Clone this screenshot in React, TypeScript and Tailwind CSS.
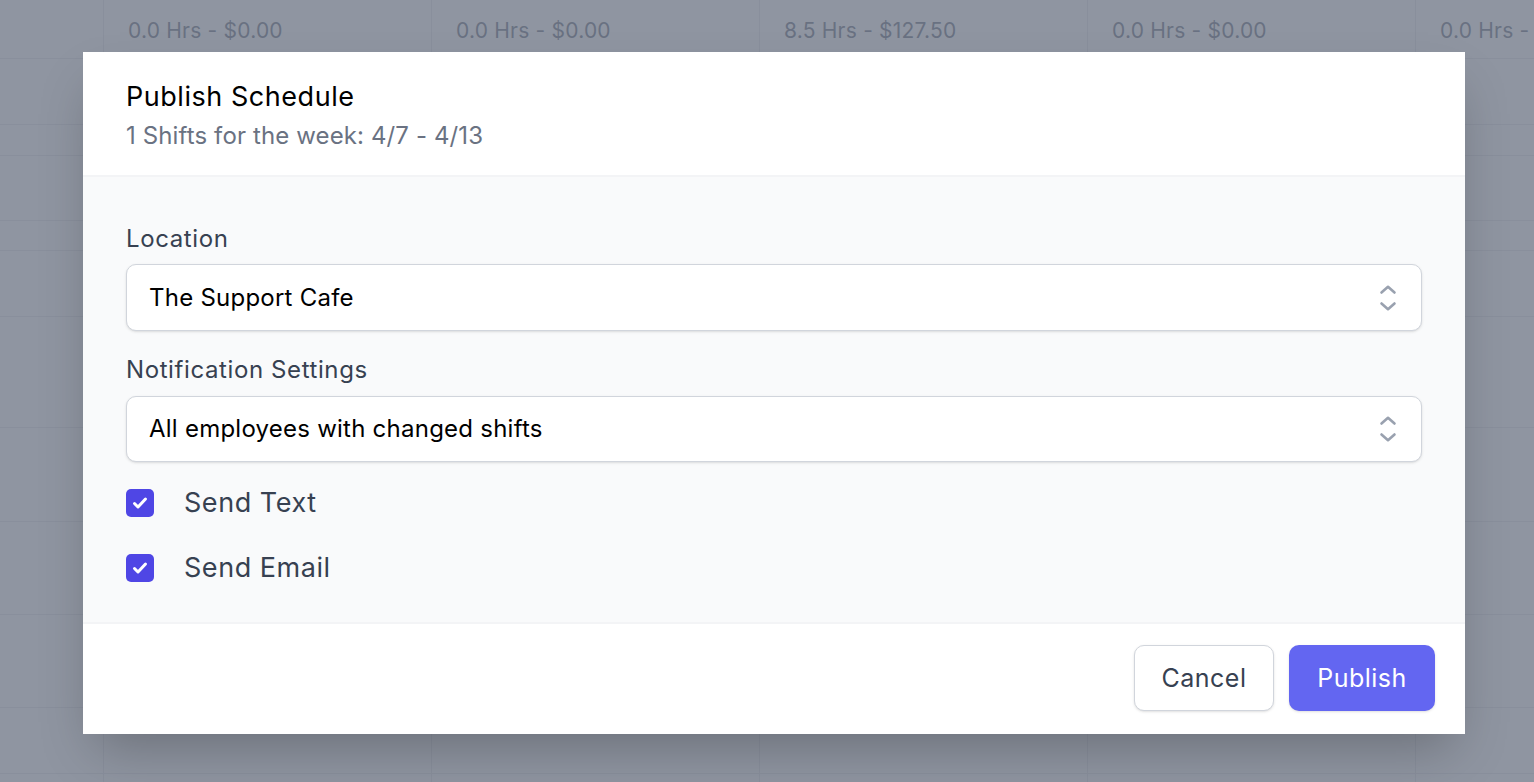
import React, { useState } from 'react';

const rowHeights = [59, 66, 31, 65, 30, 66, 111, 94, 93, 93, 66, 30];
const weekTotals = ['0.0 Hrs - $0.00', '0.0 Hrs - $0.00', '8.5 Hrs - $127.50', '0.0 Hrs - $0.00', '0.0 Hrs - $0.00'];

const SelectorIcon = () => (
  <svg className="h-[28px] w-[18px] text-gray-400" viewBox="0 0 18 28" fill="none" stroke="currentColor" strokeWidth={2.6} strokeLinecap="round" strokeLinejoin="round">
    <path d="M2.5 8.5 9 2.8l6.5 5.7" />
    <path d="M2.5 19.5 9 25.2l6.5-5.7" />
  </svg>
);

const Checkbox: React.FC<{ checked: boolean; onChange: () => void; label: string }> = ({ checked, onChange, label }) => (
  <label className="flex items-center cursor-pointer" onClick={onChange}>
    <span className={`flex h-7 w-7 items-center justify-center rounded-[5px] ${checked ? 'bg-[#4f46e5]' : 'bg-white border border-gray-300'}`}>
      {checked && (
        <svg className="h-5 w-5 text-white" viewBox="0 0 20 20" fill="none" stroke="currentColor" strokeWidth={3} strokeLinecap="round" strokeLinejoin="round">
          <path d="M4.5 10.5l3.5 3.5 7.5-8" />
        </svg>
      )}
    </span>
    <span className="ml-[30px] text-[27px] leading-[40px] tracking-[0.02em] text-[#374151]">{label}</span>
  </label>
);

const App: React.FC = () => {
  const [sendText, setSendText] = useState(true);
  const [sendEmail, setSendEmail] = useState(true);

  return (
    <div className="relative h-[782px] w-full overflow-hidden bg-white" style={{ fontFamily: "Inter, 'Noto Sans', sans-serif" }}>
      {/* Schedule grid behind the modal */}
      <div className="flex flex-col">
        {rowHeights.map((h, i) => (
          <div key={i} className="grid grid-cols-[103px_328px_328px_328px_328px_328px] border-b border-gray-200" style={{ height: h }}>
            <div />
            {weekTotals.map((t, j) => (
              <div key={j} className="border-l border-gray-200 pl-[24px]">
                {i === 0 && <span className="block pt-[17px] text-[21px] leading-7 tracking-[0.01em] text-gray-500 whitespace-nowrap">{t}</span>}
              </div>
            ))}
          </div>
        ))}
      </div>

      {/* Overlay */}
      <div className="absolute inset-0 bg-gray-500/75" />

      {/* Modal */}
      <div className="absolute left-[83px] top-[52px] w-[1382px] bg-white shadow-2xl">
        <div className="border-b-2 border-gray-100 px-[43px] pt-[27px] pb-[23px]">
          <h3 className="text-[27px] leading-[36px] tracking-[0.02em] text-black">Publish Schedule</h3>
          <p className="mt-[5px] text-[24px] leading-[32px] tracking-[0.005em] text-gray-500">1 Shifts for the week: 4/7 - 4/13</p>
        </div>

        <div className="bg-gray-50 px-[43px] pt-[46px] pb-[34px]">
          <label className="block text-[24px] leading-[32px] tracking-[0.025em] text-[#374151]">Location</label>
          <div className="mt-[9px] flex h-[67px] items-center justify-between rounded-[10px] border border-gray-300 bg-white pl-[22px] pr-[24px] shadow-sm">
            <span className="text-[24px] tracking-[0.01em] text-black">The Support Cafe</span>
            <SelectorIcon />
          </div>

          <label className="mt-[23px] block text-[24px] leading-[32px] tracking-[0.025em] text-[#374151]">Notification Settings</label>
          <div className="mt-[10px] flex h-[66px] items-center justify-between rounded-[10px] border border-gray-300 bg-white pl-[22px] pr-[24px] shadow-sm">
            <span className="text-[24px] tracking-[0.01em] text-black">All employees with changed shifts</span>
            <SelectorIcon />
          </div>

          <div className="mt-[21px] flex flex-col gap-[25px]">
            <Checkbox checked={sendText} onChange={() => setSendText(!sendText)} label="Send Text" />
            <Checkbox checked={sendEmail} onChange={() => setSendEmail(!sendEmail)} label="Send Email" />
          </div>
        </div>

        <div className="flex justify-end gap-[15px] border-t-2 border-gray-100 px-[30px] pt-[21px] pb-[23px]">
          <button className="h-[66px] w-[140px] rounded-[10px] border border-gray-300 bg-white pt-[2px] text-[25px] tracking-[0.02em] text-[#374151] shadow-sm">
            Cancel
          </button>
          <button className="h-[66px] w-[146px] rounded-[10px] bg-[#6366f1] pt-[2px] text-[25px] tracking-[0.02em] text-white shadow-sm">
            Publish
          </button>
        </div>
      </div>
    </div>
  );
};

export default App;
